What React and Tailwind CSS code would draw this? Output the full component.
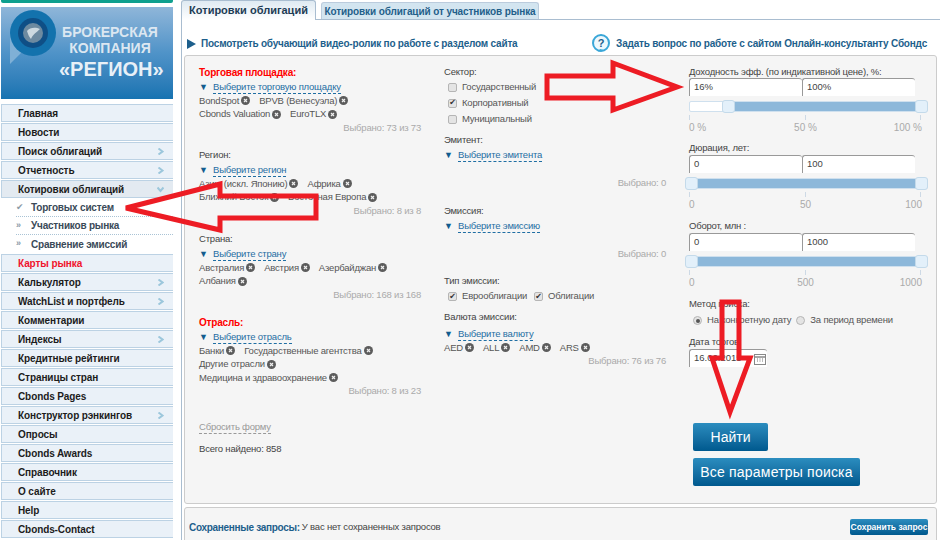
const font = { fontFamily: '"Liberation Sans","DejaVu Sans",sans-serif' };

const menu = [
  ["Главная"], ["Новости"], ["Поиск облигаций", "r"], ["Отчетность", "r"], ["Котировки облигаций", "d", true],
  ["sub"], ["Карты рынка", null, false, true], ["Калькулятор", "r"], ["WatchList и портфель", "r"], ["Комментарии"],
  ["Индексы", "r"], ["Кредитные рейтинги"], ["Страницы стран"], ["Cbonds Pages"], ["Конструктор рэнкингов", "r"],
  ["Опросы"], ["Cbonds Awards"], ["Справочник"], ["О сайте"], ["Help"], ["Cbonds-Contact"],
];

function Chev({ down }) {
  return (
    <svg width="7" height="7" viewBox="0 0 7 7" className="mr-[9px]">
      <path d={down ? "M0.5 1.5 L3.5 5 L6.5 1.5" : "M1.5 0.5 L5.5 3.5 L1.5 6.5"} fill="none" stroke="#9cc7dc" strokeWidth="2" />
    </svg>
  );
}

function MenuRow({ label, icon, active, red }) {
  return (
    <div className={`flex h-[18px] items-center justify-between border border-r-0 border-[#bcd2e4] mb-px pl-[16px] text-[10px] font-bold tracking-[-0.1px] ${active ? "bg-[#e3eaf1]" : "bg-[#eaf1f8]"} ${red ? "text-[#f0142d]" : "text-[#1c1c1c]"}`}>
      <span>{label}</span>
      {icon && <Chev down={icon === "d"} />}
    </div>
  );
}

function Sub() {
  const items = [["Торговых систем", true], ["Участников рынка"], ["Сравнение эмиссий"]];
  return (
    <div className="ml-[15px] mb-px">
      {items.map(([t, on], i) => (
        <div key={t} className={`flex h-[18px] items-center text-[10px] font-bold tracking-[-0.2px] text-[#3a4a58] ${i < 2 ? "border-b border-dotted border-[#a9c3d5]" : ""}`}>
          <span className="w-[15px] text-[9px] text-[#8a9aa6]">{on ? "✔" : "»"}</span>
          <span>{t}</span>
        </div>
      ))}
    </div>
  );
}

function X() {
  return (
    <svg width="9" height="9" viewBox="0 0 9 9" className="shrink-0">
      <circle cx="4.5" cy="4.5" r="4.5" fill="#5c5c5c" />
      <path d="M3 3 L6 6 M6 3 L3 6" stroke="#eee" strokeWidth="1.2" />
    </svg>
  );
}

function Chips({ rows, gap = "gap-[9px]" }) {
  return rows.map((r, i) => (
    <div key={i} className={`flex h-[13.5px] items-center ${gap} whitespace-nowrap text-[9.5px] tracking-[-0.2px] text-[#555]`}>
      {r.map((c) => (
        <span key={c} className="flex items-center gap-[2px]">{c}<X /></span>
      ))}
    </div>
  ));
}

function Select({ text, className = "" }) {
  return (
    <div className={`flex h-[14px] items-center text-[9.5px] tracking-[-0.2px] ${className}`}>
      <span className="w-[14px] text-[9px] leading-none text-[#135c8e]">▼</span>
      <span className="border-b border-dashed border-[#1f6ea3] leading-[12px] text-[#1f6ea3]">{text}</span>
    </div>
  );
}

function Label({ children, red, className = "" }) {
  return <div className={`flex h-[15px] items-center ${red ? "text-[10px] font-bold tracking-[-0.2px] text-[#f00]" : "text-[9.5px] tracking-[-0.2px] text-[#444]"} ${className}`}>{children}</div>;
}

function Count({ children, className = "" }) {
  return <div className={`flex h-[14px] items-center justify-end text-[9.5px] tracking-[-0.2px] text-[#aaa] ${className}`}>{children}</div>;
}

function Check({ on, label }) {
  return (
    <span className="flex items-center gap-[5px] text-[9.5px] tracking-[-0.2px] text-[#555]">
      <span className="flex h-[9px] w-[9px] items-center justify-center rounded-[2px] border border-[#b5b5b5] bg-[#e4e4e4] text-[8px] leading-none text-[#333]">{on ? "✔" : ""}</span>
      {label}
    </span>
  );
}

function Radio({ on, label }) {
  return (
    <span className="flex items-center gap-[5px] text-[9.5px] tracking-[-0.2px] text-[#555]">
      <span className="flex h-[9px] w-[9px] items-center justify-center rounded-full border border-[#b5b5b5] bg-[#e4e4e4]">
        {on && <span className="h-[4px] w-[4px] rounded-full bg-[#555]" />}
      </span>
      {label}
    </span>
  );
}

function Inputs({ a, b, className }) {
  return (
    <div className={`flex h-[18px] w-[226px] ${className}`}>
      <div className="flex w-[113px] items-center rounded-t-[3px] border-l border-t border-[#999] bg-white pl-[4px] text-[9.5px] text-[#444]">{a}</div>
      <div className="flex w-[113px] items-center rounded-t-[3px] border-l border-t border-[#999] bg-white pl-[4px] text-[9.5px] text-[#444]">{b}</div>
    </div>
  );
}

function Slider({ left = -5, ticks }) {
  return (
    <div className="mt-[5px]">
      <div className="relative h-[11px] w-[239px] rounded-[2px] border border-[#cfe0ee] bg-white">
        <div className="absolute bottom-0 right-0 top-0 bg-[#8db8da]" style={{ left: left + 6 }} />
        <span className="absolute -top-[2px] h-[13px] w-[13px] rounded-[3px] border border-[#c4daea] bg-[#e3f0fa]" style={{ left }} />
        <span className="absolute -right-[1px] -top-[2px] h-[13px] w-[13px] rounded-[3px] border border-[#c4daea] bg-[#e3f0fa]" />
      </div>
      <div className="mt-[3px] flex h-[5px] w-[232px] justify-between">
        <i className="block h-[5px] w-px bg-[#cdd9e5]" />
        <i className="block h-[5px] w-px bg-[#cdd9e5]" />
        <i className="block h-[5px] w-px bg-[#cdd9e5]" />
      </div>
      <div className="grid h-[15px] w-[233px] grid-cols-3 items-center text-[10px] text-[#aaa]">
        <span>{ticks[0]}</span>
        <span className="text-center">{ticks[1]}</span>
        <span className="text-right">{ticks[2]}</span>
      </div>
    </div>
  );
}

function Btn({ children, className }) {
  return (
    <div className={`flex items-center justify-center whitespace-nowrap rounded-[2px] bg-gradient-to-b from-[#2b8dbf] to-[#00598e] text-white ${className}`}>{children}</div>
  );
}

export default function App() {
  return (
    <div style={font} className="relative flex h-[540px] w-[940px] overflow-hidden bg-white">
      <aside className="ml-px w-[172px] shrink-0">
        <div className="h-[3px] rounded-b-[2px] bg-[#0fa08e]" />
        <div className="relative mb-[5px] mt-[4px] h-[92px] overflow-hidden bg-gradient-to-b from-[#8fb6d9] via-[#4f93c8] to-[#1673b1] text-center font-bold">
          <svg width="48" height="56" viewBox="0 0 48 56" className="absolute left-[8px] top-[2px]">
            <path d="M1 24 L1 55 L14 42 Z" fill="#7fb0d6" />
            <circle cx="24" cy="24" r="23" fill="#1372ad" />
            <circle cx="24" cy="24" r="15" fill="#0f4f86" />
            <circle cx="24" cy="24" r="10" fill="#6d8aa0" />
            <path d="M18 22 C21 18 27 18 31 20 C28 23 24 25 22 30 C20 28 19 25 18 22 Z" fill="#cdd9e0" />
          </svg>
          <div className="absolute left-[58px] top-[17px] w-[102px] text-[14px] leading-[16px] text-[#dce7f1]">БРОКЕРСКАЯ<br />КОМПАНИЯ</div>
          <div className="absolute left-[58px] top-[51px] w-[102px] text-[20px] leading-[22px] text-[#e8f0f7]">«РЕГИОН»</div>
        </div>
        {menu.map((m) =>
          m[0] === "sub" ? <Sub key="sub" /> : <MenuRow key={m[0]} label={m[0]} icon={m[1]} active={m[2]} red={m[3]} />
        )}
      </aside>

      <main className="ml-[8px] w-[759px] shrink-0">
        <div className="flex h-[20px] items-end border-b border-[#a9bdd0]">
          <div className="-mb-px flex h-[20px] w-[135px] items-center justify-center rounded-t-[3px] border border-b-0 border-[#a9bdd0] bg-gradient-to-b from-[#dfeaf2] to-white text-[11px] font-bold text-[#1d3c55]">Котировки облигаций</div>
          <div className="ml-[5px] flex h-[17px] w-[218px] items-center justify-center whitespace-nowrap rounded-t-[3px] border border-b-0 border-[#bcd] bg-[#d3e5f0] text-[10px] font-bold tracking-[-0.1px] text-[#1f5f8a]">Котировки облигаций от участников рынка</div>
        </div>
        <div className="border-l border-[#a9bdd0] pl-[2px]">
          <div className="flex h-[35px] items-center justify-between pl-[2px] pr-[13px] pt-[12px] text-[10px] font-bold tracking-[-0.2px] text-[#1d5f8c]">
            <span className="flex items-center gap-[5px]">
              <svg width="10" height="10" viewBox="0 0 10 10"><path d="M1 0 L10 5 L1 10 Z" fill="#1d5f8c" /></svg>
              Посмотреть обучающий видео-ролик по работе с разделом сайта
            </span>
            <span className="flex items-center gap-[5px]">
              <svg width="20" height="20" viewBox="0 0 20 20">
                <circle cx="10" cy="9" r="8" fill="#eef8fd" stroke="#3aa7d8" strokeWidth="2" />
                <path d="M7 18 L13 16 L9 15 Z" fill="#3aa7d8" />
                <text x="10" y="13" textAnchor="middle" fontSize="11" fontWeight="bold" fill="#1d5f8c">?</text>
              </svg>
              Задать вопрос по работе с сайтом Онлайн-консультанту Сбондс
            </span>
          </div>

          <section className="flex h-[449px] w-[753px] rounded-[3px] border border-[#ccc] bg-[#f5f5f5] pl-[14px] pt-[9px]">
            <div className="w-[222px]">
              <Label red>Торговая площадка:</Label>
              <Select text="Выберите торговую площадку" />
              <Chips rows={[["BondSpot", "BPVB (Венесуэла)"], ["Cbonds Valuation", "EuroTLX"]]} />
              <Count>Выбрано: 73 из 73</Count>
              <Label className="mt-[13px]">Регион:</Label>
              <Select text="Выберите регион" />
              <Chips rows={[["Азию (искл. Японию)", "Африка"], ["Ближний Восток", "Восточная Европа"]]} />
              <Count>Выбрано: 8 из 8</Count>
              <Label className="mt-[14px]">Страна:</Label>
              <Select text="Выберите страну" />
              <Chips rows={[["Австралия", "Австрия", "Азербайджан"], ["Албания"]]} />
              <Count>Выбрано: 168 из 168</Count>
              <Label red className="mt-[13px]">Отрасль:</Label>
              <Select text="Выберите отрасль" />
              <Chips rows={[["Банки", "Государственные агентства"], ["Другие отрасли"], ["Медицина и здравоохранение"]]} />
              <Count>Выбрано: 8 из 23</Count>
              <div className="mt-[21px] w-fit border-b border-dashed border-[#999] text-[9.5px] leading-[13px] tracking-[-0.2px] text-[#999]">Сбросить форму</div>
              <div className="mt-[8px] text-[9.5px] leading-[14px] tracking-[-0.2px] text-[#444]">Всего найдено: 858</div>
            </div>

            <div className="ml-[23px] w-[222px]">
              <Label>Сектор:</Label>
              <div className="ml-[4px] flex flex-col gap-[3px]">
                <div className="h-[13px]"><Check label="Государственный" /></div>
                <div className="h-[13px]"><Check on label="Корпоративный" /></div>
                <div className="h-[13px]"><Check label="Муниципальный" /></div>
              </div>
              <Label className="mt-[8px]">Эмитент:</Label>
              <Select text="Выберите эмитента" />
              <div className="h-[14px]" />
              <Count>Выбрано: 0</Count>
              <Label className="mt-[14px]">Эмиссия:</Label>
              <Select text="Выберите эмиссию" />
              <div className="h-[14px]" />
              <Count>Выбрано: 0</Count>
              <Label className="mt-[13px]">Тип эмиссии:</Label>
              <div className="ml-[4px] flex h-[15px] gap-[7px]">
                <Check on label="Еврооблигации" />
                <Check on label="Облигации" />
              </div>
              <Label className="mt-[6px]">Валюта эмиссии:</Label>
              <Select className="mt-[2px]" text="Выберите валюту" />
              <Chips rows={[["AED", "ALL", "AMD", "ARS"]]} />
              <Count>Выбрано: 76 из 76</Count>
            </div>

            <div className="ml-[23px] w-[232px]">
              <Label>Доходность эфф. (по индикативной цене), %:</Label>
              <Inputs a="16%" b="100%" className="-mt-[2px]" />
              <Slider left={32} ticks={["0 %", "50 %", "100 %"]} />
              <Label className="mt-[6px]">Дюрация, лет:</Label>
              <Inputs a="0" b="100" className="-mt-px" />
              <Slider ticks={["0", "50", "100"]} />
              <Label className="mt-[7px]">Оборот, млн :</Label>
              <Inputs a="0" b="1000" className="-mt-px" />
              <Slider ticks={["0", "500", "1000"]} />
              <Label className="mt-[7px]">Метод поиска:</Label>
              <div className="ml-[4px] flex h-[17px] items-center gap-[5px]">
                <Radio on label="На конкретную дату" />
                <Radio label="За период времени" />
              </div>
              <Label className="mt-[6px]">Дата торгов:</Label>
              <div className="-mt-px flex h-[18px] w-[78px] items-center justify-between rounded-t-[3px] border-l border-t border-[#999] bg-white pl-[4px] pr-px text-[9.5px] text-[#444]">
                16.06.2015
                <svg width="12" height="12" viewBox="0 0 12 12">
                  <rect x="0.5" y="1.5" width="11" height="10" fill="#fff" stroke="#888" />
                  <path d="M0 4 H12" stroke="#888" strokeWidth="1.5" />
                  <path d="M3 6 h1 M5.5 6 h1 M8 6 h1 M3 8 h1 M5.5 8 h1 M8 8 h1" stroke="#777" />
                </svg>
              </div>
              <Btn className="ml-[4px] mt-[56px] h-[28px] w-[75px] text-[14px]">Найти</Btn>
              <Btn className="ml-[4px] mt-[7px] h-[28px] w-[167px] text-[14px] tracking-[0.2px]">Все параметры поиска</Btn>
            </div>
          </section>

          <section className="mt-[3px] flex h-[50px] w-[753px] items-start justify-between rounded-[3px] border border-[#ccc] bg-[#f5f5f5] pl-[4px] pr-[8px] pt-[11px]">
            <div className="flex h-[16px] items-center gap-[2px] text-[9.5px] tracking-[-0.2px] text-[#444]">
              <span className="text-[10px] font-bold tracking-[-0.3px] text-[#1d5f8c]">Сохраненные запросы:</span>
              <span>У вас нет сохраненных запросов</span>
            </div>
            <Btn className="h-[16px] w-[78px] text-[8.5px] font-bold">Сохранить запрос</Btn>
          </section>
        </div>
      </main>

      <svg width="940" height="540" viewBox="0 0 940 540" className="pointer-events-none absolute left-0 top-0">
        <g fill="none" stroke="#ed1c24" strokeWidth="5" strokeLinejoin="miter">
          <polygon points="547,76 613,76 613,63 677,87 613,110 613,98 547,98" />
          <polygon points="126,208 220,184 220,196 316,196 316,218 220,218 220,230" />
          <polygon points="722,302 739,302 739,358 750,358 730,412 712,358 722,358" />
        </g>
      </svg>
    </div>
  );
}
